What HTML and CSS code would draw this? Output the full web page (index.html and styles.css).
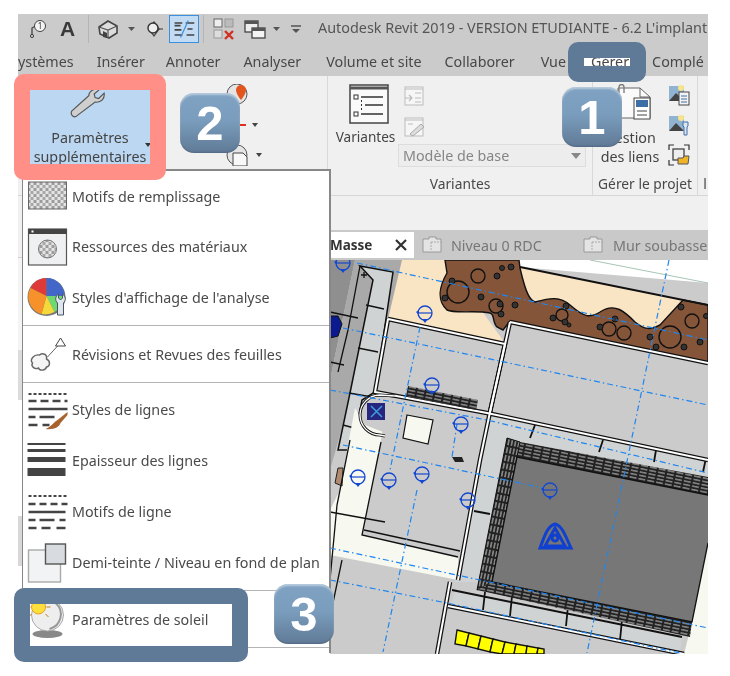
FILE: index.html
```html
<!DOCTYPE html>
<html lang="fr">
<head>
<meta charset="utf-8">
<title>Paramètres de soleil</title>
<link rel="stylesheet" href="styles.css">
</head>
<body>
<svg class="defs" width="0" height="0">
  <defs>
    <pattern id="check" width="6" height="6" patternUnits="userSpaceOnUse">
      <rect width="6" height="6" fill="#e4e4e4"/><rect width="3" height="3" fill="#9c9c9c"/><rect x="3" y="3" width="3" height="3" fill="#a8a8a8"/>
    </pattern>
    <pattern id="hatch" width="9" height="3.4" patternUnits="userSpaceOnUse" patternTransform="rotate(11.5)">
      <rect width="9" height="3.4" fill="#222"/><rect x="1" y="1" width="7" height="1.3" fill="#9a9a9a"/>
    </pattern>
    <pattern id="hatchv" width="3.4" height="8" patternUnits="userSpaceOnUse" patternTransform="rotate(11.5)">
      <rect width="3.4" height="8" fill="#222"/><rect x="1" y="1" width="1.4" height="6" fill="#9a9a9a"/>
    </pattern>
    <symbol id="gridmark" viewBox="-12 -12 24 24">
      <circle r="7" fill="none" stroke="#1448d0" stroke-width="1.300"/>
      <path d="M-7 0H7" stroke="#1448d0" stroke-width="1.200"/>
      <path d="M-3 6L0 10L3 6Z" fill="#1448d0"/>
      <path d="M-9 -1L-6 -3V2Z" fill="#1448d0"/>
    </symbol>
    <g id="walls">
      <path d="M388 319L505 344L490 412L480 460L458 580"/>
      <path d="M388 319L375 392L487 413L708 460"/>
      <path d="M510 322L708 363"/>
      <path d="M510 322L490 412"/>
      <path d="M450 582L437 654"/>
      <path d="M448 606L684 654"/>
    </g>
  </defs>
</svg>

<main class="shot">
  <header class="titlebar">
    <div class="qat">
      <svg class="qi qi-tag" viewBox="0 0 20 20"><path d="M3 16V9l5-3" fill="none" stroke="#444" stroke-width="1.300"/><circle cx="3" cy="17" r="1.600" fill="none" stroke="#444"/><circle cx="11" cy="7" r="5.500" fill="#f4f4f4" stroke="#444"/><text x="11" y="10" class="qi-num">1</text></svg>
      <span class="qi-a">A</span>
      <i class="qsep"></i>
      <svg class="qi qi-house" viewBox="0 0 22 22"><path d="M2 9L11 3L20 8V15L12 20L3 16Z" fill="#ddd" stroke="#444" stroke-width="1.600"/><path d="M2 9L11 12L20 8M11 12V20" fill="none" stroke="#555" stroke-width="1.200"/><path d="M6 19V13L10 15V20Z" fill="#444"/></svg>
      <svg class="qi-arrow" viewBox="0 0 7 4"><path d="M0 0H7L3.500 4Z" fill="#555"/></svg>
      <svg class="qi qi-diamond" viewBox="0 0 18 18"><path d="M9 2L14 9L9 16L4 9Z" fill="#eee" stroke="#444" stroke-width="1.300"/><circle cx="8" cy="8" r="5" fill="#eee" stroke="#333" stroke-width="1.400"/><path d="M14 9L18 9" stroke="#333"/></svg>
      <div class="qi-active"><svg viewBox="0 0 28 24"><path d="M3 5H12M3 8H10M3 13H11M3 19H12M16 5H26M18 12H24M17 19H26" stroke="#444" stroke-width="2"/><path d="M19 2L10 22" stroke="#3a8fe0" stroke-width="1.400"/></svg></div>
      <i class="qsep qsep-b"></i>
      <svg class="qi qi-hide" viewBox="0 0 22 22"><rect x="1" y="1" width="8" height="8" fill="#eee" stroke="#666"/><rect x="12" y="1" width="8" height="8" fill="#bbb" stroke="#999"/><rect x="1" y="12" width="8" height="8" fill="#ddd" stroke="#999"/><path d="M12 13L20 21M20 13L12 21" stroke="#d03020" stroke-width="2.400"/></svg>
      <svg class="qi qi-win" viewBox="0 0 22 22"><rect x="1" y="3" width="13" height="11" fill="#eee" stroke="#444" stroke-width="1.300"/><rect x="1" y="3" width="13" height="3" fill="#555"/><rect x="8" y="10" width="13" height="10" fill="#f4f4f4" stroke="#444" stroke-width="1.300"/><rect x="8" y="10" width="13" height="3" fill="#555"/></svg>
      <svg class="qi-arrow qi-arrow-b" viewBox="0 0 7 4"><path d="M0 0H7L3.500 4Z" fill="#555"/></svg>
      <svg class="qi-more" viewBox="0 0 10 9"><path d="M0 1H10" stroke="#555" stroke-width="1.500"/><path d="M1 4H9L5 8Z" fill="#555"/></svg>
    </div>
    <h1 class="apptitle">Autodesk Revit 2019 - VERSION ETUDIANTE - 6.2 L'implant</h1>
  </header>

  <nav class="tabs">
    <span class="tab">ystèmes</span>
    <span class="tab">Insérer</span>
    <span class="tab tab-annoter">Annoter</span>
    <span class="tab">Analyser</span>
    <span class="tab tab-volume">Volume et site</span>
    <span class="tab">Collaborer</span>
    <span class="tab tab-vue">Vue</span>
    <span class="tab tab-active">Gérer</span>
    <span class="tab">Complé</span>
  </nav>

  <section class="ribbon">
    <div class="panel panel-settings">
      <button class="bigbtn">
        <svg class="wrench" viewBox="0 0 40 34"><path d="M35 1L28 7L29 11L33 12L39 6C40 12 36 17 29 16L9 31C6 34 1 31 3 26L22 9C22 4 28 0 35 1Z" fill="#cfcfcf" stroke="#555" stroke-width="1.300"/></svg>
        <span class="bigbtn-label">Paramètres<br>supplémentaires</span>
        <i class="mini-arrow"></i>
      </button>
      <div class="settings-tools">
        <svg class="tool" viewBox="0 0 24 22"><circle cx="11" cy="10" r="10" fill="#e5e5e5" stroke="#555"/><path d="M15 1a5 5 0 0 1 5 5c0 4-5 10-5 10s-5-6-5-10a5 5 0 0 1 5-5Z" fill="#e2551f"/></svg>
        <div class="tool-mid"><i class="red-tick"></i><i class="tool-arrow"></i></div>
        <div class="tool-row"><svg class="tool" viewBox="0 0 24 22"><circle cx="11" cy="11" r="10" fill="#e5e5e5" stroke="#555"/><path d="M7 9H17L21 13V22H7Z" fill="#f8f8f8" stroke="#444"/></svg><i class="tool-arrow"></i></div>
      </div>
    </div>
    <div class="panel panel-var">
      <div class="var-body">
        <div class="var-main">
          <svg class="var-icon" viewBox="0 0 40 40"><rect x="1" y="1" width="38" height="38" fill="#fafafa" stroke="#444" stroke-width="1.500"/><path d="M1 4H39" stroke="#555" stroke-width="3"/><path d="M12 13H34M16 21H34M12 30H34" stroke="#333" stroke-width="1.400"/><rect x="5" y="11" width="4" height="4" fill="none" stroke="#333"/><path d="M12 21h1M12 17h1M12 25h1" stroke="#333" stroke-width="2"/><rect x="5" y="28" width="4" height="4" fill="none" stroke="#333"/></svg>
          <span class="var-label">Variantes</span>
        </div>
        <div class="var-side">
          <div class="var-mini">
            <svg class="minic" viewBox="0 0 20 20"><rect x="1" y="1" width="18" height="18" fill="#f6f6f6" stroke="#bbb"/><path d="M1 3H19M11 7H17M11 12H17M11 16H17" stroke="#bbb" stroke-width="1.200"/><path d="M1 12H8M5 9L8 12L5 15" fill="none" stroke="#bbb" stroke-width="1.200"/></svg>
            <svg class="minic" viewBox="0 0 20 20"><rect x="1" y="1" width="18" height="18" fill="#f6f6f6" stroke="#bbb"/><path d="M1 3H19M4 7H9" stroke="#bbb" stroke-width="1.200"/><path d="M6 17L17 7L20 10L9 19Z" fill="#ddd" stroke="#aaa"/></svg>
          </div>
          <div class="combo"><span>Modèle de base</span><i class="combo-arrow"></i></div>
        </div>
      </div>
      <div class="panel-title">Variantes</div>
    </div>
    <div class="panel panel-proj">
      <div class="proj-body">
        <div class="proj-main">
          <svg class="proj-icon" viewBox="0 0 36 36"><path d="M2 4H24L34 13V34H2Z" fill="#fafafa" stroke="#666"/><path d="M24 4V13H34" fill="none" stroke="#666"/><path d="M3 9V3A2.500 2.500 0 0 1 8 3V9" fill="none" stroke="#777" stroke-width="1.300"/><rect x="18" y="14" width="16" height="21" fill="#fff" stroke="#444"/><rect x="20" y="16" width="12" height="7" fill="#3e6ea8"/><path d="M21 27H31M21 31H31" stroke="#444"/></svg>
          <span class="proj-label">Gestion<br>des liens</span>
        </div>
        <div class="proj-side">
          <svg class="smalli" viewBox="0 0 22 22"><rect x="1" y="2" width="15" height="15" fill="#8fb3d0"/><path d="M1 17L8 9L16 17Z" fill="#444"/><circle cx="13" cy="4" r="3" fill="#f6e58a"/><rect x="11" y="8" width="10" height="13" fill="#f4f4f4" stroke="#444"/><path d="M13 12H19M13 15H19M13 18H19" stroke="#3e6ea8"/></svg>
          <svg class="smalli" viewBox="0 0 22 22"><rect x="1" y="2" width="15" height="15" fill="#8fb3d0"/><path d="M1 17L8 9L16 17Z" fill="#444"/><circle cx="13" cy="4" r="3" fill="#f6e58a"/><path d="M15 8h5v4l-1 1v8h-3v-8l-1-1Z" fill="#dde5ee" stroke="#3e6ea8"/></svg>
          <svg class="smalli" viewBox="0 0 22 22"><path d="M1 6V1H6M16 1H21V6M1 16V21H6" fill="none" stroke="#333" stroke-width="1.200"/><rect x="5" y="5" width="11" height="11" fill="#eee" stroke="#444" stroke-width="1.300"/><path d="M10 14H15L16 12H21L20 20H10Z" fill="#f0b429" stroke="#555"/></svg>
        </div>
      </div>
      <div class="panel-title">Gérer le projet</div>
    </div>
    <div class="panel panel-cut"><div class="panel-title">l</div></div>
  </section>

  <div class="workspace">
    <aside class="side">
      <div class="side-a"></div>
      <div class="side-b"></div>
      <div class="side-c"></div>
      <div class="side-d"></div>
      <div class="side-e"></div>
      <div class="side-f"></div>
    </aside>
    <div class="views">
      <div class="doctabs">
        <div class="doctab doctab-on"><b>Masse</b><svg class="doc-x" viewBox="0 0 12 12"><path d="M1 1L11 11M11 1L1 11" stroke="#333" stroke-width="2.200"/></svg></div>
        <div class="doctab doctab-a"><svg class="doc-i" viewBox="0 0 20 18"><path d="M1 3H7V1H14V3H19V16H1Z" fill="#e4e4e4" stroke="#999"/><path d="M9 6V15M9 6H19" stroke="#aaa" stroke-dasharray="2 1"/></svg><span>Niveau 0 RDC</span></div>
        <div class="doctab doctab-b"><svg class="doc-i" viewBox="0 0 20 18"><path d="M1 3H7V1H14V3H19V16H1Z" fill="#e4e4e4" stroke="#999"/><path d="M9 6V15M9 6H19" stroke="#aaa" stroke-dasharray="2 1"/></svg><span>Mur soubasse</span></div>
      </div>
      <svg class="plan" viewBox="330 260 378 394" role="img" aria-label="Plan du site">
        <rect x="330" y="260" width="378" height="394" fill="#cbcbcb"/>
        <!-- site: white, beige, brown -->
        <path d="M519 260H708V283L519 267Z" fill="#fff"/>
        <path d="M590 260L708 283" class="pale"/>
        <path d="M400 260H445L505 343L388 318Z" fill="#f9e5c4"/>
        <path d="M520 267L680 300L708 306V345L520 300Z" fill="#f9e5c4"/>
        <path d="M445 260H519L520 268C524 285 528 300 535 302C550 298 560 296 570 305C585 318 590 318 600 312C615 302 625 312 635 322C645 330 650 330 660 325L683 300L708 305V362L510 321L503 330L497 327C492 322 495 314 490 313C475 310 455 314 447 310C436 300 440 285 447 273Z" fill="#85553a" stroke="#111" stroke-width="1.400"/>
        <path d="M520 267L708 305" class="k"/>
        <g class="tree">
          <circle cx="478" cy="276" r="7"/><circle cx="458" cy="292" r="11"/><circle cx="496" cy="306" r="7"/><circle cx="562" cy="315" r="6"/><circle cx="609" cy="329" r="7"/><circle cx="624" cy="333" r="7"/><circle cx="670" cy="337" r="11"/><circle cx="692" cy="321" r="7"/>
        </g>
        <g class="shrub">
          <circle cx="445" cy="298" r="3"/><circle cx="452" cy="281" r="3"/><circle cx="497" cy="276" r="3"/><circle cx="502" cy="268" r="2.500"/><circle cx="511" cy="267" r="3"/><circle cx="481" cy="297" r="3"/><circle cx="500" cy="304" r="3"/><circle cx="501" cy="314" r="3"/><circle cx="515" cy="305" r="3"/><circle cx="553" cy="318" r="3"/><circle cx="566" cy="306" r="3"/><circle cx="565" cy="322" r="3"/><circle cx="569" cy="325" r="2"/><circle cx="600" cy="327" r="3"/><circle cx="615" cy="319" r="3"/><circle cx="650" cy="337" r="3"/><circle cx="656" cy="347" r="3"/><circle cx="684" cy="347" r="3"/><circle cx="700" cy="342" r="3"/><circle cx="681" cy="307" r="3"/><circle cx="706" cy="316" r="2.500"/>
        </g>
        <!-- left strips -->
        <path d="M330 260H355L330 380Z" fill="#8f8f8f"/>
        <path d="M355 260H402L388 319L375 392L350 400L330 470V380Z" fill="#a9a9a9"/>
        <path d="M360 266L393 272L375 392L362 400L352 450H338L350 393L373 280Z" fill="#d0d3d3" stroke="#111" stroke-width="1.500"/>
        <path d="M360 266L348 330L338 372M330 362L344 365M330 312L358 318M366 305L384 309M358 348L378 352M349 393L372 397M343 425L358 429M364 272V278M361 275H367" class="k k-thin"/>
        <!-- cream and rooms -->
        <path d="M355 408L365 425L383 432L362 535L458 557V580L330 555V510L340 490L347 450Z" fill="#f7f8ef"/>
        <path d="M338 468H343L342 486L335 483Z" fill="#b08a70" stroke="#222"/>
        <path d="M385 395L487 415L458 557L362 535L382 435Z" fill="#cbcbcb"/>
        <path d="M381 442L362 535L458 557M364 530L460 551" class="k k-thin"/>
        <path d="M350 440L337 505L330 580M342 560L330 617" class="k k-thin"/>
        <path d="M330 512L385 522" class="k k-thin"/>
        <path d="M407 415L433 420L428 444L403 438Z" fill="#f7f8ef" stroke="#111" stroke-width="1.200"/>
        <path d="M452 457H462L464 462H455Z" fill="#222"/>
        <path d="M390 318L504 344L490 412L377 392Z" fill="#cbcbcb"/>
        <!-- cell bands -->
        <path d="M518 440L492 582L455 582L487 416Z" fill="#d0d3d3"/>
        <path d="M490 412L708 458V478L520 442L486 438Z" fill="#d0d3d3"/>
        <path d="M474 511L490 514M535 425L530 438M603 440L599 452M656 450L654 462M706 458L703 472" class="k"/>
        <path d="M455 592L682 637L680 654L450 606Z" fill="#d0d3d3"/>
        <path d="M452 590L682 637M485 592L483 610M512 596L510 616M568 606L566 626M622 620L620 640" class="k"/>
        <!-- dark room -->
        <path d="M708 543L692 622L684 654H708Z" fill="#f7f8ef"/>
        <path d="M520 442L708 477V495L517 457Z" fill="url(#hatch)"/>
        <path d="M477 590L492 582L517 457L520 442L507 438Z" fill="url(#hatchv)" stroke="#111"/>
        <path d="M477 590L690 637L692 622L492 582Z" fill="url(#hatch)"/>
        <path d="M517 457L708 495V543L692 622L492 582Z" fill="#777"/>
        <path d="M517 457L708 495M517 457L492 582L692 622L708 543" class="k k-thin"/>
        <!-- walls -->
        <use href="#walls" class="wall-b"/>
        <use href="#walls" class="wall-w"/>
        <!-- yellow units -->
        <g class="yellow">
          <path d="M457 630L469 633L466 646L455 644Z"/><path d="M469 633L481 636L478 649L466 646Z"/><path d="M481 636L493 639L490 652L478 649Z"/><path d="M493 639L505 642L502 654L490 652Z"/><path d="M505 642L516 644L514 654H502Z"/><path d="M516 644L527 646L526 654H514Z"/><path d="M527 646L538 648L537 654H526Z"/><path d="M538 648L544 649L544 654H537Z"/>
        </g>
        <!-- corner spiral, bricks -->
        <path d="M408 386L478 400L476 410L406 396Z" fill="url(#hatch)"/>
        <path d="M395 396L380 395A20 20 0 0 0 380 435L385 436" fill="none" stroke="#111" stroke-width="3"/>
        <path d="M395 396L380 395A20 20 0 0 0 380 435L385 436" fill="none" stroke="#fff" stroke-width="1.300"/>
        <rect x="367" y="403" width="18" height="17" fill="#26267e"/>
        <path d="M371 406L382 417M382 406L371 417" stroke="#3e9ce0" stroke-width="1.500"/>
        <path d="M330 316H338L342 324L338 336L330 338Z" fill="#0c1a90" stroke="#111"/>
        <!-- dash-dot grid -->
        <g class="grid">
          <path d="M357 263L708 340"/><path d="M343 328L708 405"/><path d="M330 390L487 420L708 473"/><path d="M343 445L543 488"/><path d="M330 548L480 580L708 628"/><path d="M330 580L447 603L680 653"/>
          <path d="M669 260L587 653"/><path d="M420 327L390 470"/><path d="M417 490L383 652"/><path d="M457 424L452 457"/>
        </g>
        <use href="#gridmark" x="331" y="251" width="24" height="24"/>
        <use href="#gridmark" x="413" y="301" width="24" height="24"/>
        <use href="#gridmark" x="420" y="373" width="24" height="24"/>
        <use href="#gridmark" x="449" y="412" width="24" height="24"/>
        <use href="#gridmark" x="346" y="465" width="24" height="24"/>
        <use href="#gridmark" x="377" y="468" width="24" height="24"/>
        <use href="#gridmark" x="410" y="462" width="24" height="24"/>
        <use href="#gridmark" x="456" y="488" width="24" height="24"/>
        <use href="#gridmark" x="538" y="478" width="24" height="24"/>
        <g class="triple"><path d="M555 524C563 526 566 538 571 548H540C544 538 547 526 555 524Z"/><path d="M555 528L565 546H545Z"/><circle cx="555" cy="538" r="3"/></g>
      </svg>
    </div>
  </div>

  <div class="menu">
    <div class="menu-group menu-g1">
      <div class="item">
        <svg class="ico" viewBox="0 0 40 40"><rect x="1" y="6" width="38" height="27" fill="url(#check)" stroke="#666"/></svg>
        <span>Motifs de remplissage</span>
      </div>
      <div class="item">
        <svg class="ico" viewBox="0 0 40 40"><rect x="1" y="2" width="38" height="36" fill="#eef0f2" stroke="#555" stroke-width="1.200"/><rect x="1" y="2" width="38" height="5" fill="#444"/><rect x="4" y="3.500" width="2" height="2" fill="#fff"/><circle cx="20" cy="22" r="9" fill="url(#check)" stroke="#777"/></svg>
        <span>Ressources des matériaux</span>
      </div>
      <div class="item">
        <svg class="ico" viewBox="0 0 40 40"><circle cx="19" cy="20" r="19" fill="#777"/><path d="M19 19V1A18 18 0 0 0 3 11Z" fill="#df3a3a"/><path d="M19 19V1A18 18 0 0 1 37 19Z" fill="#4267c9"/><path d="M19 19H37A18 18 0 0 1 27 35Z" fill="#6fd86f"/><path d="M19 19L27 35A18 18 0 0 1 14 37Z" fill="#f5d93a"/><path d="M19 19L14 37A18 18 0 0 1 3 11Z" fill="#f79129"/><path d="M31 17V21L33 23L35 21V17C38 19 39 23 36 26V38H30V26C27 23 28 19 31 17Z" fill="#dfe5ea" stroke="#456"/></svg>
        <span>Styles d'affichage de l'analyse</span>
      </div>
    </div>
    <div class="menu-group menu-g2">
      <div class="item">
        <svg class="ico" viewBox="0 0 40 40"><path d="M12 21C16 18 20 21 19 25C23 27 23 32 19 33C18 37 12 37 11 34C7 36 3 32 5 29C2 26 6 20 12 21Z" fill="#f5f5f5" stroke="#666" stroke-width="1.400"/><path d="M20 23L31 11" stroke="#666"/><path d="M33 4L38 12H28Z" fill="#fff" stroke="#444"/></svg>
        <span>Révisions et Revues des feuilles</span>
      </div>
    </div>
    <div class="menu-group menu-g3">
      <div class="item">
        <svg class="ico" viewBox="0 0 40 40"><path d="M1 4H40" stroke="#444" stroke-width="2" stroke-dasharray="3 2"/><path d="M1 11H40" stroke="#444" stroke-width="2.400" stroke-dasharray="8 4"/><path d="M1 19H40" stroke="#444" stroke-width="2.400"/><path d="M1 27H8M12 27H27" stroke="#444" stroke-width="2.400"/><path d="M1 35H10M15 35H22" stroke="#444" stroke-width="2.400"/><path d="M40 22L30 30C26 32 24 37 18 39C26 40 32 37 33 33L40 25Z" fill="#a8622c"/></svg>
        <span>Styles de lignes</span>
      </div>
      <div class="item">
        <svg class="ico" viewBox="0 0 40 40"><rect y="2" width="38" height="2" fill="#444"/><rect y="8" width="38" height="3" fill="#444"/><rect y="16" width="38" height="5" fill="#444"/><rect y="27" width="38" height="8" fill="#444"/></svg>
        <span>Epaisseur des lignes</span>
      </div>
      <div class="item">
        <svg class="ico" viewBox="0 0 40 40"><path d="M1 4H40" stroke="#444" stroke-width="2" stroke-dasharray="3 2"/><path d="M1 12H40" stroke="#444" stroke-width="2.400" stroke-dasharray="7 4"/><path d="M1 20H38" stroke="#444" stroke-width="2.400"/><path d="M1 28H8M12 28H27M32 28H38" stroke="#444" stroke-width="2.400"/><path d="M1 36H9M14 36H23M29 36H38" stroke="#444" stroke-width="2.400"/></svg>
        <span>Motifs de ligne</span>
      </div>
      <div class="item">
        <svg class="ico" viewBox="0 0 40 40"><rect x="1" y="7" width="32" height="32" fill="#f2f3f5" stroke="#aaa" stroke-width="1.400"/><rect x="18" y="1" width="20" height="20" fill="#d8dbe0" stroke="#555" stroke-width="1.400"/></svg>
        <span>Demi-teinte / Niveau en fond de plan</span>
      </div>
    </div>
    <div class="menu-group menu-g4">
      <div class="item">
        <svg class="ico" viewBox="0 0 40 40"><ellipse cx="20" cy="35" rx="15" ry="4" fill="#888"/><circle cx="20" cy="16" r="16" fill="#eee" stroke="#aaa"/><path d="M28 4A15 15 0 0 1 22 30" fill="none" stroke="#999" stroke-width="2"/><circle cx="11" cy="8" r="7" fill="#ffdf3c" stroke="#e8a020"/><path d="M0 8H3M19 8H23M11 0V-3M4 1L2 -1M4 15L1 18M18 15L21 18" stroke="#c97f15"/></svg>
        <span>Paramètres de soleil</span>
      </div>
    </div>
  </div>

  <div class="frame frame-tab"></div>
  <div class="frame frame-btn"></div>
  <div class="frame frame-sun"></div>
  <div class="badge badge-1">1</div>
  <div class="badge badge-2">2</div>
  <div class="badge badge-3">3</div>
</main>
</body>
</html>
```

FILE: styles.css
```css
* { box-sizing: border-box; }
html, body { margin: 0; background: #fff; }
body { width: 730px; height: 676px; overflow: hidden; font-family: "Noto Sans", "Open Sans", sans-serif; color: #444; }
.defs { position: absolute; }

.shot { position: relative; width: 690px; height: 640px; margin: 14px 0 0 18px; }
.titlebar, .tabs, .ribbon, .workspace { filter: blur(.35px); }

/* title bar */
.titlebar { height: 30px; background: #cbcbcb; display: flex; align-items: center; overflow: hidden; white-space: nowrap; }
.qat { width: 300px; flex: none; display: flex; align-items: center; padding-left: 11px; }
.qi { flex: none; display: block; }
.qi-tag { width: 20px; height: 20px; }
.qi-num { font-size: 8px; text-anchor: middle; fill: #333; }
.qi-a { width: 16px; margin-left: 11px; font: bold 21px/24px "Liberation Sans", sans-serif; color: #3a3a3a; }
.qsep { width: 1px; height: 28px; background: #b4b4b4; margin-left: 12px; }
.qi-house { width: 22px; height: 22px; margin-left: 8px; }
.qi-arrow { width: 7px; height: 4px; margin-left: 9px; }
.qi-diamond { width: 18px; height: 18px; margin-left: 10px; }
.qi-active { width: 30px; height: 28px; margin-left: 6px; padding: 2px; background: #c3dcf3; border: 1px solid #3a8fde; }
.qi-active svg { display: block; width: 100%; height: 100%; }
.qsep-b { margin-left: 4px; }
.qi-hide { width: 22px; height: 22px; margin-left: 9px; }
.qi-win { width: 22px; height: 22px; margin-left: 9px; }
.qi-arrow-b { margin-left: 7px; }
.qi-more { width: 10px; height: 9px; margin-left: 11px; }
.apptitle { margin: -4px 0 0; font-size: 14.400px; font-weight: 400; color: #555; }

/* ribbon tabs */
.tabs { height: 32px; background: #cbcbcb; display: flex; align-items: flex-start; gap: 23px; overflow: hidden; white-space: nowrap; font-size: 14.300px; color: #484848; line-height: 36px; }
.tab { flex: none; height: 32px; }
.tab-annoter { margin-left: -2px; }
.tab-volume { margin-left: 2px; }
.tab-vue { margin-left: 3px; }
.tab-active { background: #fff; padding: 0 8px; margin: 0 -8px 0 -6px; }

/* ribbon */
.ribbon { height: 154px; background: #f0f0f0; display: flex; align-items: stretch; font-size: 14.300px; overflow: hidden; position: relative; }
.panel { flex: none; position: relative; height: 120px; border-bottom: 1px solid #d6d6d6; }
.panel-settings { width: 309px; display: flex; padding: 14px 0 0 12px; }
.bigbtn { width: 120px; height: 74px; padding: 0; border: 0; background: #bbd7f1; font: inherit; color: #444; display: flex; flex-direction: column; align-items: center; position: relative; line-height: 19px; }
.wrench { width: 36px; height: 32px; margin-top: -3px; margin-right: 6px; flex: none; }
.bigbtn-label { margin-top: 9px; white-space: nowrap; }
.mini-arrow { position: absolute; right: -1px; bottom: 14px; border: 3px solid transparent; border-top: 4px solid #333; }
.settings-tools { width: 60px; margin-left: 76px; display: flex; flex-direction: column; margin-top: -6px; height: 82px; justify-content: space-between; }
.tool { width: 24px; height: 22px; display: block; flex: none; }
.tool-mid { display: flex; align-items: center; justify-content: flex-end; padding-right: 28px; }
.red-tick { width: 8px; height: 1.500px; background: #e03020; }
.tool-arrow { border: 3px solid transparent; border-top: 4px solid #444; margin-top: 3px; display: block; margin-left: 6px; }
.tool-row { display: flex; align-items: center; }

.panel-var { width: 265px; border-left: 1px solid #d8d8d8; }
.var-body { display: flex; height: 98px; }
.var-main { width: 71px; padding: 8px 0 0 4px; display: flex; flex-direction: column; align-items: center; }
.var-icon { width: 40px; height: 40px; flex: none; margin-left: 6px; }
.var-label { margin-top: 3px; color: #444; font-size: 13.600px; }
.var-side { flex: 1; display: flex; flex-direction: column; align-items: stretch; }
.var-mini { display: flex; flex-direction: column; gap: 11px; padding: 10px 0 0 5px; height: 68px; }
.minic { width: 20px; height: 20px; display: block; }
.combo { height: 23px; width: 188px; margin-left: -1px; background: #ededed; border: 1px solid #ddd; display: flex; align-items: center; justify-content: space-between; padding: 0 4px; color: #868686; }
.combo-arrow { border: 5px solid transparent; border-top: 6px solid #888; margin-top: 6px; }
.panel-title { text-align: center; line-height: 20px; color: #484848; font-size: 13.800px; }

.panel-proj { width: 106px; border-left: 1px solid #d8d8d8; border-right: 1px solid #d8d8d8; }
.proj-body { display: flex; height: 98px; }
.proj-main { width: 72px; padding-top: 8px; display: flex; flex-direction: column; align-items: center; }
.proj-icon { width: 36px; height: 36px; margin-left: 10px; flex: none; }
.proj-label { text-align: center; line-height: 19px; margin-top: 8px; margin-left: 2px; }
.proj-side { padding: 8px 0 0 3px; display: flex; flex-direction: column; gap: 8px; }
.smalli { width: 22px; height: 22px; display: block; }
.panel-cut { width: 10px; padding-left: 4px; padding-top: 98px; }

/* workspace */
.workspace { display: flex; height: 424px; }
.side { width: 312px; flex: none; display: flex; flex-direction: column; }
.side-a { height: 28px; background: #f0f0f0; border-bottom: 1px solid #cfcfcf; }
.side-b { height: 92px; background: #f4f4f4; }
.side-c { height: 50px; background: #dcdcdc; }
.side-d { height: 116px; background: #fff; }
.side-e { height: 50px; background: #d8d8d8; }
.side-f { flex: 1; background: #fff; }
.views { flex: 1; display: flex; flex-direction: column; overflow: hidden; background: #cbcbcb; }
.doctabs { height: 30px; background: #c9c9c9; display: flex; padding-top: 2px; white-space: nowrap; font-size: 14.300px; color: #777; }
.doctab { display: flex; align-items: center; height: 26px; flex: none; }
.doc-i { width: 20px; height: 18px; flex: none; }
.doctab-on { width: 84px; background: #fff; color: #333; margin-right: 8px; }
.doctab-on b { width: 62px; font-weight: 700; font-size: 13.500px; flex: none; }
.doc-x { width: 12px; height: 12px; margin-left: 3px; flex: none; }
.doctab-a { width: 161px; gap: 9px; }
.doctab-b { gap: 10px; }
.plan { flex: none; width: 378px; height: 394px; display: block; }

.pale { stroke: #a8c4b4; stroke-width: 1; fill: none; }
.k { stroke: #111; stroke-width: 1.800; fill: none; }
.k-thin { stroke-width: 1.300; }
.wall-b { fill: none; stroke: #111; stroke-width: 4.500; }
.wall-w { fill: none; stroke: #fff; stroke-width: 2; }
.tree circle { fill: none; stroke: #111; stroke-width: 1.400; }
.shrub circle { fill: #333; stroke: #111; stroke-width: 1; }
.grid path { fill: none; stroke: #1f86f0; stroke-width: 1.200; stroke-dasharray: 6 3 1.500 3; }
.yellow path { fill: #ffff00; stroke: #111; stroke-width: 1.400; }
.triple * { fill: none; stroke: #1040d0; stroke-width: 3; }

/* drop-down menu */
.menu { position: absolute; left: 4px; top: 155px; width: 309px; height: 484px; background: #fff; border: 2px solid #888; border-bottom: 0; border-left-width: 1.500px; font-size: 14.300px; color: #4a4a4a; display: flex; flex-direction: column; filter: blur(.3px); }
.menu-group { border-bottom: 1px solid #b4b4b4; display: flex; flex-direction: column; padding-left: 4px; }
.menu-g1 { height: 155px; }
.menu-g2 { height: 57px; justify-content: center; }
.menu-g3 { height: 208px; padding-top: 1px; }
.menu-g4 { height: 57px; justify-content: center; }
.item { height: 50.500px; display: flex; align-items: center; gap: 4px; flex: none; white-space: nowrap; }
.ico { width: 41px; height: 40px; flex: none; display: block; }
.menu-g3 .item { height: 51px; }

/* tutorial annotations */
.frame { position: absolute; border: 16px solid #5f7a96; border-radius: 10px; }
.frame-tab { left: 550px; top: 28px; width: 78px; height: 40px; }
.frame-btn { left: -4px; top: 60px; width: 152px; height: 106px; border-color: #ff8f87; }
.frame-sun { left: -4px; top: 574px; width: 234px; height: 74px; }
.badge { position: absolute; width: 60px; height: 60px; border-radius: 14px; background: linear-gradient(#7fa2c3 0%, #7b9dbd 45%, #5f7a96 100%); box-shadow: inset 0 2px 2px rgba(255,255,255,.45), inset 0 -1px 2px rgba(0,0,0,.15); color: #fff; font: bold 49px/60px "Liberation Sans", sans-serif; text-align: center; }
.badge-1 { left: 544px; top: 73px; }
.badge-2 { left: 162px; top: 79px; }
.badge-3 { left: 256px; top: 570px; }
```
